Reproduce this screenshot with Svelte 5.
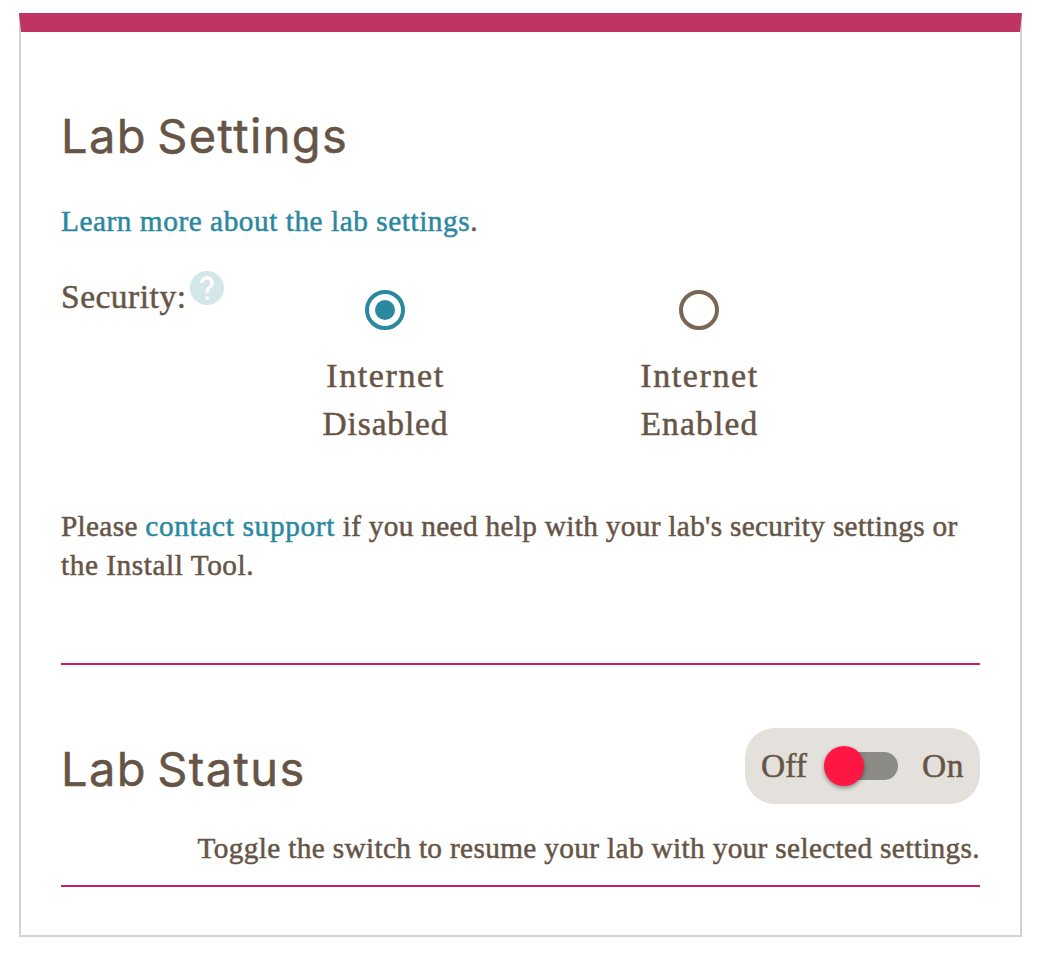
<script>
  let security = $state('disabled');
  let running = $state(false);
  const options = [
    { id: 'disabled', word: 'Disabled' },
    { id: 'enabled', word: 'Enabled' }
  ];
</script>

<main class="card">
  <h1 class="settings-title">Lab Settings</h1>
  <p class="learn"><a href="#learn">Learn more about the lab settings</a>.</p>

  <section class="security">
    <div class="label">
      <span>Security:</span>
      <svg class="help" viewBox="2 2 20 20" aria-hidden="true">
        <path d="M12 2C6.48 2 2 6.48 2 12s4.48 10 10 10 10-4.48 10-10S17.52 2 12 2zm1 17h-2v-2h2v2zm2.07-7.75l-.9.92C13.45 12.9 13 13.5 13 15h-2v-.5c0-1.1.45-2.1 1.17-2.83l1.24-1.26c.37-.36.59-.86.59-1.41 0-1.1-.9-2-2-2s-2 .9-2 2H8c0-2.21 1.79-4 4-4s4 1.79 4 4c0 .88-.36 1.68-.93 2.25z" />
      </svg>
    </div>
    {#each options as option}
      <button class="option" class:selected={security === option.id} onclick={() => (security = option.id)}>
        <span class="radio"></span>
        <span class="word internet">Internet</span>
        <span class="word {option.id}">{option.word}</span>
      </button>
    {/each}
  </section>

  <p class="support">
    <span class="first">Please <a href="#support">contact support</a> if you need help with your lab's security settings or</span>
    <span class="second">the Install Tool.</span>
  </p>

  <hr />

  <section class="status">
    <h1 class="status-title">Lab Status</h1>
    <button class="toggle" class:on={running} onclick={() => (running = !running)}>
      <span class="off-text">Off</span>
      <span class="track"><span class="thumb"></span></span>
      <span class="on-text">On</span>
    </button>
  </section>
  <p class="hint">Toggle the switch to resume your lab with your selected settings.</p>
  <hr />
</main>

<style>
  :global(body) { background: #fff; }
  .card {
    box-sizing: border-box;
    width: 1003px;
    height: 924px;
    margin: 13px 0 0 19px;
    padding: 76px 40px 0;
    border: 2px solid #d3d3d3;
    border-top: 19px solid #bf3463;
    color: #665546;
    font-family: "Liberation Serif", Georgia, serif;
    -webkit-text-stroke: 0.5px currentColor;
  }
  h1, p { margin: 0; white-space: nowrap; }
  h1 {
    height: 58px;
    font: 400 47px/56px Inter, sans-serif;
    letter-spacing: 1.35px;
    word-spacing: -4px;
    -webkit-text-stroke: 0.5px currentColor;
  }
  p { font-size: 29.3px; line-height: 39px; }
  a { color: #2a889f; text-decoration: none; }
  button {
    padding: 0;
    border: 0;
    background: none;
    color: inherit;
    font: inherit;
    -webkit-text-stroke: inherit;
    cursor: pointer;
  }
  .learn { margin-top: 36px; letter-spacing: 0.54px; }
  .security {
    display: grid;
    grid-template-columns: 167px 314px 314px;
    height: 178px;
    margin-top: 30px;
    font-size: 33.5px;
    line-height: 48px;
  }
  .label { display: flex; align-items: flex-start; gap: 4px; white-space: nowrap; letter-spacing: 0.5px; padding-top: 2px; }
  .help { flex: none; width: 34px; height: 34px; margin-top: -2px; fill: #d3e6ea; }
  .option { display: flex; flex-direction: column; align-items: center; padding-top: 19px; }
  .radio {
    display: grid;
    place-items: center;
    box-sizing: border-box;
    width: 40px;
    height: 40px;
    margin-bottom: 22px;
    border: 4px solid #7a6653;
    border-radius: 50%;
  }
  .selected .radio { border-color: #2a889f; }
  .selected .radio::after { content: ""; width: 20px; height: 20px; border-radius: 50%; background: #2a889f; }
  .word { padding-left: 1px; letter-spacing: 0.85px; }
  .internet { font-size: 34px; letter-spacing: 1.6px; }
  .enabled { letter-spacing: 1.2px; }
  .support { margin-top: 58px; letter-spacing: 0.31px; }
  .support a { letter-spacing: 0.66px; }
  .support span { display: block; }
  .support .second { letter-spacing: 0.55px; }
  hr { height: 2px; margin: 0; border: 0; background: #cd1d68; }
  .support + hr { margin-top: 78px; }
  .status { display: flex; justify-content: space-between; height: 76px; margin-top: 63px; }
  .status-title { padding-top: 13px; }
  .toggle {
    display: flex;
    align-items: center;
    box-sizing: border-box;
    width: 235px;
    height: 76px;
    padding: 0 16px;
    border-radius: 30px;
    background: #e4e1dc;
    font-size: 33.5px;
    line-height: 48px;
  }
  .off-text { width: 65px; text-align: left; }
  .track { display: flex; align-items: center; width: 72px; height: 28px; border-radius: 14px; background: #8b8a85; }
  .thumb {
    width: 40px;
    height: 40px;
    margin-left: -2px;
    border-radius: 50%;
    background: #ff1744;
    box-shadow: 0 2px 4px rgb(0 0 0 / 40%);
  }
  .on .thumb { margin-left: 34px; }
  .on-text { margin-left: auto; letter-spacing: 0.5px; }
  .hint { margin-top: 25px; text-align: right; letter-spacing: 0.34px; }
  .hint + hr { margin-top: 17px; }
</style>
